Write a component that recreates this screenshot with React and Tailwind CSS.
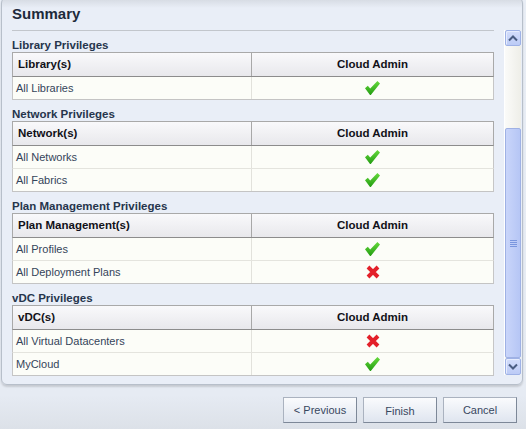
import React from "react";

const sections = [
  { title: "Library Privileges", col: "Library(s)", rows: [["All Libraries", true]] },
  { title: "Network Privileges", col: "Network(s)", rows: [["All Networks", true], ["All Fabrics", true]] },
  { title: "Plan Management Privileges", col: "Plan Management(s)", rows: [["All Profiles", true], ["All Deployment Plans", false]] },
  { title: "vDC Privileges", col: "vDC(s)", rows: [["All Virtual Datacenters", false], ["MyCloud", true]] },
];

function Check() {
  return (
    <svg width="15" height="14" viewBox="0 0 15 14">
      <defs>
        <linearGradient id="chk" x1="0" y1="0" x2="0" y2="1">
          <stop offset="0" stopColor="#66da3c" />
          <stop offset="1" stopColor="#229c12" />
        </linearGradient>
      </defs>
      <polygon points="0,7.2 2.8,4.8 5.2,7.6 12.4,0 15,2.4 5.8,14 5,14" fill="url(#chk)" />
    </svg>
  );
}

function Cross() {
  return (
    <svg width="14" height="14" viewBox="0 0 14 14">
      <path d="M2 2L12 12M12 2L2 12" stroke="#e3202a" strokeWidth="3.9" />
    </svg>
  );
}

function Table({ col, rows }) {
  return (
    <div>
      <div className="flex h-[25px] border border-[#a9a9a9] border-b-[#8c8c8c] bg-[linear-gradient(to_bottom,#f9f9fb,#e8e8ec)] text-[11.5px] font-bold text-[#111118]">
        <div className="w-[239px] border-r border-[#a8a8a8] pl-[5px] flex items-center">{col}</div>
        <div className="flex-1 flex items-center justify-center">Cloud Admin</div>
      </div>
      {rows.map(([name, ok], i) => (
        <div
          key={name}
          className={
            "flex h-[23px] border-x border-b border-x-[#c6c6c6] bg-[#fcfdf8] text-[11px] text-[#34445a] " +
            (i === rows.length - 1 ? "border-b-[#c4c4c4]" : "border-b-[#e4e4de]")
          }
        >
          <div className="w-[239px] border-r border-[#e2e2dc] pl-[3px] flex items-center">{name}</div>
          <div className="flex-1 flex items-center justify-center">{ok ? <Check /> : <Cross />}</div>
        </div>
      ))}
    </div>
  );
}

function Chevron({ down }) {
  return (
    <svg width="10" height="7" viewBox="0 0 10 7">
      <path d={down ? "M1 1.5L5 5.5L9 1.5" : "M1 5.5L5 1.5L9 5.5"} fill="none" stroke="#4a5d82" strokeWidth="2" />
    </svg>
  );
}

function ScrollBtn({ down }) {
  return (
    <div className="h-full border border-[#9fb2e6] rounded-[2px] bg-[linear-gradient(to_bottom,#d3ddfb,#bccbf6)] flex items-center justify-center shadow-[inset_1px_1px_0_#e6ecfd]">
      <Chevron down={down} />
    </div>
  );
}

function Button({ children, up }) {
  return (
    <div
      className={
        "w-[74px] h-[26px] border border-[#aab2bf] border-b-[#7d8898] border-r-[#7d8898] bg-[linear-gradient(to_bottom,#fafbfd,#dfe5ef)] flex justify-center text-[11px] text-[#38475f] " +
        (up ? "items-start pt-[5px]" : "items-center")
      }
    >
      {children}
    </div>
  );
}

export default function App() {
  return (
    <div className="w-[526px] h-[429px] overflow-hidden bg-[linear-gradient(to_bottom,#e9eef6_0%,#e6ebf3_92%,#dce1e8_100%)] font-['Liberation_Sans',Arial,sans-serif]">
      <div className="ml-[1px] mt-[-3px] w-[522px] h-[388px] rounded-[6px] border border-[#b7bfca] bg-[linear-gradient(to_bottom,#d3d8e0_0px,#e9eef7_10px)] shadow-[0_2px_2px_rgba(0,0,0,0.14)] flex overflow-hidden">
        <div className="pl-[10px] pt-[7px] w-[492px] flex flex-col">
          <div className="h-[18px] leading-[18px] text-[15px] font-bold text-[#1d2a3b]">Summary</div>
          <div className="mt-[7px] h-px w-[482px] bg-[#c2c6cc]" />
          <div className="w-[482px]">
            {sections.map((s) => (
              <div key={s.title} className="mt-[8px]">
                <div className="h-[13px] leading-[13px] text-[11.5px] font-bold text-[#26354c]">{s.title}</div>
                <Table col={s.col} rows={s.rows} />
              </div>
            ))}
          </div>
        </div>
        <div className="ml-[10px] mt-[32px] w-[17px] h-[345px] flex flex-col border-l border-[#ffffff] bg-[#f3f4f0]">
          <div className="h-[16px]"><ScrollBtn /></div>
          <div className="h-[82px] bg-[linear-gradient(to_right,#fbfbf9,#eeeee8)]" />
          <div className="h-[230px] border border-[#9fb1e4] rounded-[2px] bg-[linear-gradient(to_right,#c9d5fa,#b6c6f5)] flex flex-col items-center justify-center gap-[1px]">
            <div className="w-[7px] h-px bg-[#7a96de]" />
            <div className="w-[7px] h-px bg-[#7a96de]" />
            <div className="w-[7px] h-px bg-[#7a96de]" />
            <div className="w-[7px] h-px bg-[#7a96de]" />
          </div>
          <div className="h-[17px]"><ScrollBtn down /></div>
        </div>
      </div>
      <div className="mt-[12px] flex justify-end gap-[6px] pr-[9px]">
        <Button>&lt; Previous</Button>
        <Button up>Finish</Button>
        <Button>Cancel</Button>
      </div>
    </div>
  );
}
